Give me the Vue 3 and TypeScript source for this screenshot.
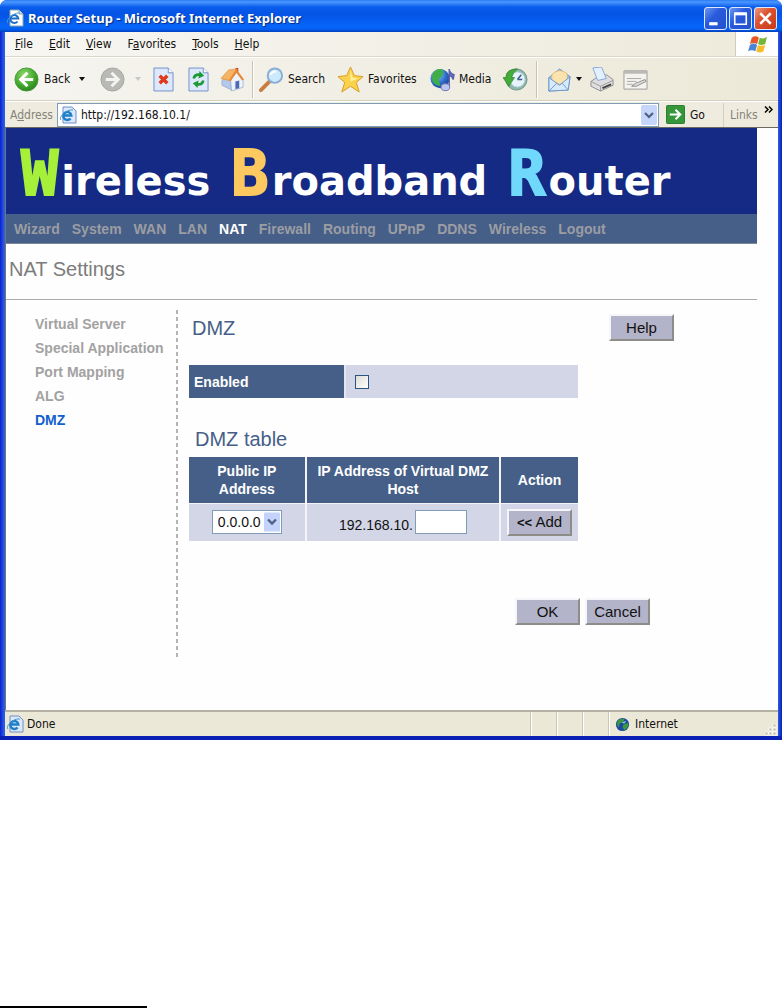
<script setup lang="ts">
import { ref } from 'vue'

interface MenuItem {
  before: string
  key: string
  after: string
}

const menus: MenuItem[] = [
  { before: '', key: 'F', after: 'ile' },
  { before: '', key: 'E', after: 'dit' },
  { before: '', key: 'V', after: 'iew' },
  { before: 'F', key: 'a', after: 'vorites' },
  { before: '', key: 'T', after: 'ools' },
  { before: '', key: 'H', after: 'elp' },
]

const sections: string[] = [
  'Wizard', 'System', 'WAN', 'LAN', 'NAT', 'Firewall',
  'Routing', 'UPnP', 'DDNS', 'Wireless', 'Logout',
]
const pages: string[] = ['Virtual Server', 'Special Application', 'Port Mapping', 'ALG', 'DMZ']

const address = ref('http://192.168.10.1/')
const enabled = ref(false)
const publicIp = ref('0.0.0.0')
const hostPart = ref('')
</script>

<template>
  <div class="sheet">
    <div class="window">
      <header class="titlebar">
        <svg class="ie" viewBox="0 0 18 18" aria-hidden="true">
          <path d="M4 1h9l4 4v12H4z" fill="#fff" stroke="#8aa" />
          <path d="M13 1v4h4" fill="#cde" stroke="#8aa" />
          <path d="M11.500 12.500a4 4 0 1 1 .8-3H5" fill="none" stroke="#1f6fc8" stroke-width="2" />
          <path d="M2 14C-1 11 8 3 14 4" fill="none" stroke="#4aa3e8" />
        </svg>
        <h1>Router Setup - Microsoft Internet Explorer</h1>
        <div class="controls">
          <button type="button" aria-label="Minimize">
            <svg viewBox="0 0 20 20"><path d="M4 15h8" stroke="#fff" stroke-width="3" /></svg>
          </button>
          <button type="button" aria-label="Maximize">
            <svg viewBox="0 0 20 20"><path d="M4.500 5v10.500h11V5" fill="none" stroke="#fff" stroke-width="1.500" /><path d="M4 5.500h12" stroke="#fff" stroke-width="3" /></svg>
          </button>
          <button type="button" class="close" aria-label="Close">
            <svg viewBox="0 0 20 20"><path d="M5 5l10 10M15 5L5 15" stroke="#fff" stroke-width="2.400" /></svg>
          </button>
        </div>
      </header>

      <nav class="menubar" aria-label="Menu">
        <button v-for="m in menus" :key="m.key" type="button">{{ m.before }}<u>{{ m.key }}</u>{{ m.after }}</button>
        <span class="flag">
          <svg viewBox="0 0 22 20" aria-hidden="true">
            <path d="M4 3q4-3 8 0l-2 7q-4-2-8 0z" fill="#e8562a" />
            <path d="M13 3q4 2 8-1l-2 8q-4 2-8 0z" fill="#72b63a" />
            <path d="M2 11q4-3 8 0l-2 7q-4-2-8 0z" fill="#4a86d8" />
            <path d="M11 11q4 2 8 0l-2 7q-4 3-8 0z" fill="#f5bd2c" />
          </svg>
        </span>
      </nav>

      <div class="toolbar">
        <button type="button" class="back">
          <svg class="i25" viewBox="0 0 26 26" aria-hidden="true">
            <defs><radialGradient id="gb" cx=".4" cy=".3" r=".8"><stop offset="0" stop-color="#8fdc6a" /><stop offset=".6" stop-color="#3fa52b" /><stop offset="1" stop-color="#257a1a" /></radialGradient></defs>
            <circle cx="13" cy="13" r="12" fill="url(#gb)" stroke="#4b9a3e" />
            <path d="M14 6l-7 7 7 7M8 13h12" fill="none" stroke="#fff" stroke-width="3.200" />
          </svg>
          Back
          <i class="caret"></i>
        </button>
        <button type="button" class="forward" aria-label="Forward">
          <svg class="i25" viewBox="0 0 26 26" aria-hidden="true">
            <circle cx="13" cy="13" r="12" fill="#b9b9b6" stroke="#a5a5a2" />
            <path d="M12 6l7 7-7 7M18 13H6" fill="none" stroke="#f4f4f0" stroke-width="3" />
          </svg>
          <i class="caret faint"></i>
        </button>
        <button type="button" class="stop" aria-label="Stop">
          <svg class="page" viewBox="0 0 22 26" aria-hidden="true">
            <path d="M1 1h15l5 5v19H1z" fill="#dde9fb" stroke="#6f8fc8" /><path d="M16 1v5h5" fill="#fff" stroke="#6f8fc8" />
            <path d="M7 9l8 8M15 9l-8 8" stroke="#e03a1c" stroke-width="3.600" />
          </svg>
        </button>
        <button type="button" class="refresh" aria-label="Refresh">
          <svg class="page" viewBox="0 0 22 26" aria-hidden="true">
            <path d="M1 1h15l5 5v19H1z" fill="#dde9fb" stroke="#6f8fc8" /><path d="M16 1v5h5" fill="#fff" stroke="#6f8fc8" />
            <path d="M6 12q1-5 7-4" fill="none" stroke="#1d9a36" stroke-width="2.800" /><path d="M12 4l5 5-6 3z" fill="#1d9a36" />
            <path d="M16 14q-1 5-7 4" fill="none" stroke="#1d9a36" stroke-width="2.800" /><path d="M10 22l-5-5 6-3z" fill="#1d9a36" />
          </svg>
        </button>
        <button type="button" class="home" aria-label="Home">
          <svg class="i25" viewBox="0 0 26 26" aria-hidden="true">
            <path d="M16 1h3v5h-3z" fill="#c23a2a" />
            <path d="M2 14l6-5 4 4v11l-10-5z" fill="#b4c8ea" stroke="#8da4cc" stroke-width=".7" />
            <path d="M11 13l7-8 6 8v8l-12 4z" fill="#eef3fb" stroke="#8da4cc" stroke-width=".7" />
            <path d="M1 12L9 3l9-1-8 12z" fill="#f6b565" stroke="#dd8a35" stroke-width=".7" />
            <path d="M17 2l8 11-2 1-6-8-6 9-2-1z" fill="#e88a35" />
            <path d="M16 15l4-1v8l-4 1z" fill="#4a6cb2" />
          </svg>
        </button>
        <i class="divider"></i>
        <button type="button" class="search">
          <svg class="i25" viewBox="0 0 26 26" aria-hidden="true">
            <path d="M2 24l9-9" stroke="#c87d43" stroke-width="4" stroke-linecap="round" />
            <circle cx="16.500" cy="9" r="7.500" fill="#cdeafd" stroke="#8aaed4" stroke-width="2" />
            <path d="M12 8q2-4 6-3" fill="none" stroke="#fff" stroke-width="2" />
          </svg>
          Search
        </button>
        <button type="button" class="favorites">
          <svg class="i27" viewBox="0 0 28 28" aria-hidden="true">
            <path d="M14 1l4 9 9 1-7 6 3 10-9-6-9 6 3-10-7-6 9-1z" fill="#fbd24c" stroke="#d79a25" />
            <path d="M14 4l2 8 6 1-8 3z" fill="#fff09a" />
          </svg>
          Favorites
        </button>
        <button type="button" class="media">
          <svg class="i25" viewBox="0 0 26 26" aria-hidden="true">
            <defs><radialGradient id="gm" cx=".35" cy=".3" r=".8"><stop offset="0" stop-color="#8fc8ff" /><stop offset=".6" stop-color="#2c69c8" /><stop offset="1" stop-color="#143c86" /></radialGradient></defs>
            <circle cx="10.500" cy="12" r="10" fill="url(#gm)" />
            <path d="M3 6q5-6 11-3l-1 6-4 4 2 7q-8-1-9-8z" fill="#3fae48" />
            <path d="M20 20V2q0 4 5 6l-1 5q-1-4-4-4" fill="#6a6fc0" stroke="#5a5fae" stroke-width="1.500" />
            <ellipse cx="16" cy="21" rx="4.500" ry="3.600" fill="#b9c4f0" stroke="#6a6fb4" />
          </svg>
          Media
        </button>
        <button type="button" class="history" aria-label="History">
          <svg class="i25" viewBox="0 0 26 26" aria-hidden="true">
            <circle cx="14" cy="13" r="11" fill="#8db9a6" stroke="#6d958c" />
            <circle cx="15" cy="13" r="8" fill="#e6f3fb" stroke="#a6c2d2" />
            <path d="M15 13l4-5M15 13h5" stroke="#3b5f86" stroke-width="1.500" />
            <path d="M15 2Q3 2 3 11H0l6 9 6-9H9q1-5 6-9z" fill="#43ac3a" stroke="#2b7f28" stroke-width=".7" />
          </svg>
        </button>
        <i class="divider"></i>
        <button type="button" class="mail" aria-label="Mail">
          <svg class="i25" viewBox="0 0 26 26" aria-hidden="true">
            <path d="M2 11L13 2l11 8-2 14-20 1z" fill="#9cc6ee" stroke="#6d97c6" />
            <path d="M5 8q8-8 16-1v7l-8 4-8-4z" fill="#fbe3b0" stroke="#dcae63" stroke-width=".7" />
            <path d="M2 11l11 8 11-9-2 14-20 1z" fill="#d7ebfc" stroke="#6d97c6" />
            <path d="M2 25l8-8M22 24l-6-7" stroke="#6d97c6" />
          </svg>
          <i class="caret"></i>
        </button>
        <button type="button" class="print" aria-label="Print">
          <svg class="i25" viewBox="0 0 26 26" aria-hidden="true">
            <path d="M2 15l6-4 10-3 7 5v6l-13 6-10-5z" fill="#dedede" stroke="#8f8f8f" />
            <path d="M4 1l9-1 5 12-9 2z" fill="#e5f0ff" stroke="#86a6d8" />
            <path d="M2 15l10 5 13-6M12 20v5" fill="none" stroke="#9a9a9a" />
            <path d="M14 22l9-4" stroke="#444" stroke-width="2" />
          </svg>
        </button>
        <button type="button" class="edit" aria-label="Edit">
          <svg class="i25" viewBox="0 0 26 26" aria-hidden="true">
            <path d="M1 4h24v19H1z" fill="#f4f3ee" stroke="#9b9b98" /><path d="M1 4h24v3H1z" fill="#b9b9b5" />
            <path d="M4 12h15M4 15h10M4 18h6" stroke="#aaa" /><path d="M9 20l4-3 10-4 1 2-10 5z" fill="#ddd" stroke="#777" stroke-width=".8" />
          </svg>
        </button>
      </div>

      <div class="addressbar">
        <label for="address">A<u>d</u>dress</label>
        <div class="field">
          <svg class="ie" viewBox="0 0 18 18" aria-hidden="true">
            <path d="M4 1h9l4 4v12H4z" fill="#dce9fb" stroke="#6d8fca" />
            <path d="M11.500 12.500a4 4 0 1 1 .8-3H5" fill="none" stroke="#1f7fc8" stroke-width="2.400" />
            <path d="M2 14C-1 11 8 3 14 4" fill="none" stroke="#3a93c8" />
          </svg>
          <input id="address" v-model="address" type="text" />
          <button type="button" class="drop" aria-label="Show addresses">
            <svg viewBox="0 0 10 10"><path d="M1 3l4 4 4-4" fill="none" stroke="#4d6185" stroke-width="2.200" /></svg>
          </button>
        </div>
        <button type="button" class="go">
          <svg viewBox="0 0 20 20" aria-hidden="true"><rect x=".5" y=".5" width="19" height="19" rx="1" fill="#35973a" stroke="#267a2c" /><path d="M4 10h11M10 5l5 5-5 5" fill="none" stroke="#fff" stroke-width="2.200" /></svg>
          Go
        </button>
        <span class="links">Links</span>
        <button type="button" class="more" aria-label="More links">
          <svg viewBox="0 0 9 7"><path d="M1 .5l3 3-3 3M5 .5l3 3-3 3" fill="none" stroke="#000" stroke-width="1.500" /></svg>
        </button>
      </div>

      <div class="viewport">
        <div class="banner">
          <span class="word"><b class="green">W</b>ireless</span>
          <span class="word"><b class="amber">B</b>roadband</span>
          <span class="word"><b class="cyan">R</b>outer</span>
        </div>
        <nav class="sections" aria-label="Sections">
          <a v-for="s in sections" :key="s" href="#" :class="{ active: s === 'NAT' }">{{ s }}</a>
        </nav>
        <h2 class="heading">NAT Settings</h2>

        <div class="columns">
          <nav class="side" aria-label="NAT pages">
            <a v-for="p in pages" :key="p" href="#" :class="{ active: p === 'DMZ' }">{{ p }}</a>
          </nav>
          <i class="dashes"></i>
          <main>
            <div class="top">
              <h3>DMZ</h3>
              <button type="button" class="raised">Help</button>
            </div>
            <table class="enable">
              <tbody>
                <tr>
                  <th scope="row"><label for="enabled">Enabled</label></th>
                  <td><input id="enabled" v-model="enabled" type="checkbox" /></td>
                </tr>
              </tbody>
            </table>
            <h3 class="second">DMZ table</h3>
            <table class="hosts">
              <thead>
                <tr>
                  <th scope="col" class="c1">Public IP Address</th>
                  <th scope="col" class="c2">IP Address of Virtual DMZ Host</th>
                  <th scope="col" class="c3">Action</th>
                </tr>
              </thead>
              <tbody>
                <tr>
                  <td>
                    <span class="pick">
                      <select v-model="publicIp" aria-label="Public IP Address">
                        <option>0.0.0.0</option>
                      </select>
                      <svg viewBox="0 0 16 19" aria-hidden="true"><rect width="16" height="19" rx="1" fill="#c3d3fb" /><path d="M4 7l4 4 4-4" fill="none" stroke="#4d6185" stroke-width="2.400" /></svg>
                    </span>
                  </td>
                  <td>
                    <div class="host">
                      <label for="host">192.168.10.</label>
                      <input id="host" v-model="hostPart" type="text" />
                    </div>
                  </td>
                  <td><button type="button" class="raised"><span class="chev">&lt;&lt;</span> Add</button></td>
                </tr>
              </tbody>
            </table>
            <div class="actions">
              <button type="button" class="raised">OK</button>
              <button type="button" class="raised">Cancel</button>
            </div>
          </main>
        </div>
      </div>

      <footer class="status">
        <svg class="ie" viewBox="0 0 18 18" aria-hidden="true">
          <path d="M4 1h9l4 4v12H4z" fill="#dce9fb" stroke="#6d8fca" />
          <path d="M11.500 12.500a4 4 0 1 1 .8-3H5" fill="none" stroke="#1f7fc8" stroke-width="2.400" />
          <path d="M2 14C-1 11 8 3 14 4" fill="none" stroke="#3a93c8" />
        </svg>
        <span class="done">Done</span>
        <i class="pane"></i><i class="pane"></i><i class="pane"></i>
        <span class="zone">
          <svg viewBox="0 0 16 16" aria-hidden="true">
            <circle cx="8" cy="8" r="7" fill="#1c4aa0" />
            <path d="M3 4q3-3 7-2l-1 3-4 2-1 4q-3-2-1-7zM9 8l5-2q1 5-4 8l-2-3z" fill="#3d9a3c" />
            <path d="M7 6l5-2-2 3z" fill="#9ad0f0" />
          </svg>
          Internet
        </span>
        <svg class="grip" viewBox="0 0 12 12" aria-hidden="true">
          <path d="M8 0h3v3H8zM4 4h3v3H4zM8 4h3v3H8zM0 8h3v3H0zM4 8h3v3H4zM8 8h3v3H8z" fill="#bdb9a6" stroke="#fff" stroke-width=".8" />
        </svg>
      </footer>
    </div>
    <hr class="rule" />
  </div>
</template>

<style>
body {
  margin: 0;
  background: #fff;
}
</style>

<style scoped>
* {
  box-sizing: border-box;
}
.sheet {
  display: flex;
  flex-direction: column;
  min-height: 100vh;
  font-family: 'Liberation Sans', Arial, sans-serif;
}
.window {
  border-bottom: 4px solid #0a20b4;
  border-radius: 7px 7px 0 0;
  background: linear-gradient(90deg, #0a20d0 0, #2a5ce4 4px, #2a5ce4 calc(100% - 4px), #0a1fb0 100%);
  padding: 0 4px 0 5px;
  font-family: 'DejaVu Sans Condensed', 'Noto Sans', sans-serif;
  font-size: 12px;
  color: #111;
}
button {
  border: 0;
  padding: 0;
  background: none;
  color: inherit;
  font: inherit;
}
svg {
  display: block;
  flex: none;
}
.ie {
  width: 18px;
  height: 18px;
}
.titlebar {
  display: flex;
  align-items: center;
  height: 32px;
  margin: 0 -4px 0 -5px;
  padding: 4px 5px 0 6px;
  border-radius: 7px 7px 0 0;
  background: linear-gradient(#2a7af5 0, #4a97ff 2px, #0a5cec 7px, #0553e4 14px, #0666fa 26px, #0560f2 29px, #0240c0 32px);
  color: #fff;
}
.titlebar h1 {
  flex: 1;
  margin: 0 0 0 4px;
  font: bold 13px/20px 'Noto Sans', sans-serif;
  text-shadow: 1px 1px 1px #0a2a80;
}
.controls {
  display: flex;
  gap: 2px;
}
.controls button {
  width: 23px;
  height: 23px;
  border: 1px solid #dfe9ff;
  border-radius: 3px;
  background: linear-gradient(135deg, #6c97f2, #2a5bdc 40%, #2452cc);
}
.controls svg {
  width: 21px;
  height: 21px;
}
.controls .close {
  background: linear-gradient(135deg, #ee9a80, #dc5230 40%, #c83a14);
}
.menubar {
  display: flex;
  align-items: center;
  height: 25px;
  padding-left: 10px;
  gap: 16px;
  border-bottom: 1px solid #dcd8c8;
  background: linear-gradient(90deg, #f7f6f2, #edeadb);
}
.flag {
  display: flex;
  align-self: stretch;
  align-items: center;
  width: 43px;
  margin-left: auto;
  padding-left: 12px;
  border-left: 1px solid #d0ccbc;
  background: #fff;
}
.flag svg {
  width: 20px;
  height: 18px;
}
.toolbar {
  display: flex;
  align-items: center;
  height: 44px;
  padding-left: 9px;
  border-top: 1px solid #fff;
  border-bottom: 1px solid #d4d0c0;
  background: linear-gradient(90deg, #f5f4ef, #ece9d8);
}
.toolbar button {
  display: flex;
  align-items: center;
  gap: 4px;
  white-space: nowrap;
}
.i25 {
  width: 25px;
  height: 25px;
}
.i27 {
  width: 27px;
  height: 27px;
}
.page {
  width: 21px;
  height: 25px;
}
.caret {
  border: 3px solid transparent;
  border-top: 4px solid #111;
  border-bottom: 0;
}
.caret.faint {
  border-top-color: #c8c8c4;
}
.toolbar .back {
  gap: 5px;
  width: 86px;
}
.back .caret {
  margin-left: 4px;
}
.toolbar .forward {
  gap: 10px;
  width: 53px;
}
.stop {
  width: 35px;
}
.refresh {
  width: 32px;
}
.home {
  width: 32px;
}
.divider {
  flex: none;
  width: 2px;
  height: 37px;
  border-left: 1px solid #c5c2b2;
  border-right: 1px solid #fff;
}
.search {
  width: 78px;
  margin-left: 5px;
}
.favorites {
  width: 93px;
}
.media {
  width: 73px;
}
.history {
  width: 33px;
}
.toolbar .mail {
  width: 42px;
  margin-left: 9px;
}
.print {
  width: 34px;
}
.addressbar {
  display: flex;
  align-items: center;
  height: 27px;
  padding: 1px 3px 1px 5px;
  background: #efecdf;
  border-top: 1px solid #fff;
  border-bottom: 1px solid #6b6a62;
}
.addressbar label {
  width: 47px;
  color: #85837a;
}
.field {
  display: flex;
  flex: 1;
  align-items: center;
  height: 24px;
  padding: 0 1px;
  border: 1px solid #7f9db9;
  background: #fff;
}
.field input {
  flex: 1;
  min-width: 0;
  margin-left: 4px;
  padding: 0;
  border: 0;
  outline: 0;
  background: none;
  color: #111;
  font: inherit;
}
.drop {
  display: grid;
  place-items: center;
  width: 16px;
  height: 20px;
  border-radius: 2px;
  background: #c6d6fb;
}
.drop svg {
  width: 10px;
  height: 10px;
}
.go {
  display: flex;
  align-items: center;
  gap: 5px;
  width: 57px;
  margin-left: 7px;
}
.go svg {
  width: 19px;
  height: 19px;
}
.links {
  width: 41px;
  padding-left: 6px;
  border-left: 1px solid #d5d1c0;
  line-height: 24px;
  color: #85837a;
}
.more {
  align-self: flex-start;
  margin: 3px 2px 0 0;
}
.more svg {
  width: 9px;
  height: 7px;
}
.viewport {
  min-height: 582px;
  border-left: 1px solid #77766e;
  background: #fefefe;
  font-family: 'Liberation Sans', Arial, sans-serif;
}
.banner {
  display: flex;
  align-items: baseline;
  gap: 21px;
  height: 86px;
  margin-right: 21px;
  padding: 3px 0 0 15px;
  background: #152a84;
  overflow: hidden;
}
.word {
  font: bold 40px/86px 'DejaVu Sans', sans-serif;
  color: #fff;
  white-space: nowrap;
}
.word b {
  margin-right: 3px;
  font: bold 62px/86px 'DejaVu Sans Mono', monospace;
  -webkit-text-stroke: 2px currentColor;
}
.green {
  color: #a6f03a;
}
.amber {
  color: #fbc95f;
}
.cyan {
  color: #6fd8fb;
}
.sections {
  display: flex;
  align-items: center;
  gap: 12px;
  height: 30px;
  margin-right: 21px;
  padding-left: 8px;
  background: #465f88;
  border-bottom: 1px solid #7d8899;
}
a {
  text-decoration: none;
}
.sections a {
  font-size: 14px;
  font-weight: bold;
  color: #9b9da3;
}
.sections a.active {
  color: #fff;
}
.heading {
  height: 56px;
  margin: 0 21px 0 0;
  padding: 12px 0 0 3px;
  border-bottom: 1px solid #aaa;
  font-size: 20px;
  line-height: 26px;
  font-weight: normal;
  color: #7c7c7c;
}
.columns {
  display: flex;
  padding-top: 10px;
}
.side {
  display: flex;
  flex-direction: column;
  width: 170px;
  padding: 2px 0 0 29px;
}
.side a {
  font-size: 14px;
  line-height: 24px;
  font-weight: bold;
  color: #a2a2a2;
  white-space: nowrap;
}
.side a.active {
  color: #1260cc;
}
.dashes {
  flex: none;
  width: 2px;
  min-height: 348px;
  background: repeating-linear-gradient(#b4b4b4 0, #b4b4b4 4px, transparent 4px, transparent 7px);
}
main {
  flex: 0 1 485px;
  margin-left: 11px;
}
.top {
  display: flex;
  justify-content: space-between;
  align-items: flex-start;
  height: 55px;
  padding-top: 4px;
}
h3 {
  margin: 0;
  padding-left: 3px;
  font-size: 20px;
  line-height: 28px;
  font-weight: normal;
  color: #465f88;
}
.raised {
  width: 65px;
  height: 27px;
  border: 2px solid;
  border-color: #f6f6fa #8e8c86 #8e8c86 #f6f6fa;
  background: #b3b4c9;
  font-family: 'Liberation Sans', Arial, sans-serif;
  font-size: 15px;
  line-height: 20px;
  color: #111;
}
.chev {
  font-size: 13px;
  font-weight: bold;
}
table {
  width: 100%;
  max-width: 389px;
  border-collapse: collapse;
  table-layout: fixed;
}
th {
  background: #465f88;
  color: #fff;
  font-size: 14px;
  line-height: 18px;
  font-weight: bold;
}
td {
  background: #d3d6e7;
}
.enable th {
  width: 40%;
  height: 33px;
  padding: 0 0 0 5px;
  text-align: left;
}
.enable td {
  padding: 0 0 0 9px;
  border-left: 2px solid #e4e6f0;
}
.enable input {
  display: block;
  appearance: none;
  width: 14px;
  height: 14px;
  margin: 0;
  border: 1px solid #2a5580;
  background: linear-gradient(135deg, #dcdcd7, #fff);
}
.second {
  margin-top: 25px;
  padding: 0 0 2px 6px;
  line-height: 32px;
}
.hosts th {
  height: 46px;
  padding: 0 6px;
}
.hosts td {
  height: 38px;
  padding: 0;
  border-top: 1px solid #f4f4f8;
  text-align: center;
}
.hosts th + th,
.hosts td + td {
  border-left: 2px solid #f4f4f8;
}
.c1 {
  width: 30%;
}
.c2 {
  width: 50%;
}
.c3 {
  width: 20%;
}
.pick {
  display: inline-grid;
  align-items: center;
  justify-items: end;
  vertical-align: middle;
}
.pick select,
.pick svg {
  grid-area: 1 / 1;
}
.pick select {
  appearance: none;
  width: 70px;
  height: 24px;
  padding: 0 0 0 5px;
  border: 1px solid #7f9db9;
  border-radius: 0;
  background: #fff;
  font: 14px 'Liberation Sans', sans-serif;
  color: #111;
}
.pick svg {
  width: 16px;
  height: 20px;
  margin-right: 2px;
  pointer-events: none;
}
.host {
  display: flex;
  align-items: flex-end;
  justify-content: center;
  gap: 2px;
  font-size: 14px;
  line-height: 18px;
}
.host input {
  width: 52px;
  height: 24px;
  padding: 0 3px;
  border: 1px solid #7f9db9;
  background: #fff;
  font: inherit;
}
.actions {
  display: flex;
  justify-content: flex-end;
  gap: 5px;
  padding: 57px 24px 0 0;
}
.status {
  display: flex;
  align-items: center;
  height: 26px;
  padding: 0 1px;
  border-top: 2px solid #b4b1a2;
  background: #ebe8d7;
}
.done {
  flex: 1;
  margin-left: 3px;
}
.pane,
.zone {
  align-self: stretch;
  border-left: 1px solid #cbc7b4;
  box-shadow: inset 1px 0 #fff;
}
.pane {
  width: 26px;
}
.zone {
  display: flex;
  align-items: center;
  gap: 5px;
  width: 157px;
  padding-left: 6px;
}
.zone svg {
  width: 15px;
  height: 15px;
}
.grip {
  align-self: flex-end;
  width: 12px;
  height: 12px;
}
.rule {
  width: 147px;
  height: 2px;
  margin: auto 0 0;
  border: 0;
  background: #000;
}
</style>
